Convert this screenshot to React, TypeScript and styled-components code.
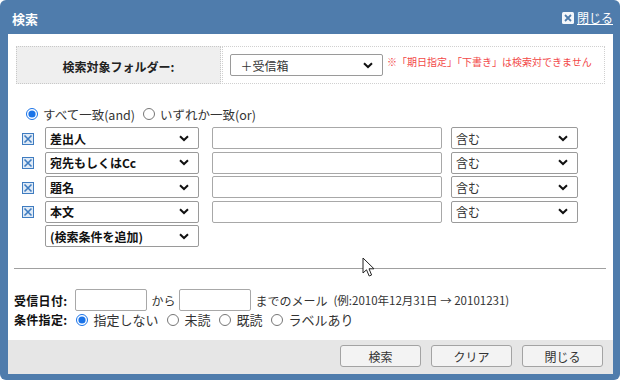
import React from "react";
import styled, { createGlobalStyle } from "styled-components";

const GlobalStyle = createGlobalStyle`
  html, body { margin: 0; padding: 0; background: #ffffff; }
  body { font-family: "Noto Sans CJK JP", "Noto Sans", sans-serif; font-size: 12px; color: #222; }
`;

const Chevron = () => (
  <svg width="10" height="7" viewBox="0 0 10 7">
    <path d="M1 1.2 L5 5 L9 1.2" fill="none" stroke="#111" strokeWidth="2" />
  </svg>
);

const CrossBox = () => (
  <svg width="12" height="12" viewBox="0 0 12 12">
    <rect x="0.5" y="0.5" width="11" height="11" fill="#dfeaf6" stroke="#3f7cc0" />
    <path d="M2.5 2.5 L9.5 9.5 M9.5 2.5 L2.5 9.5" stroke="#3f7cc0" strokeWidth="1.6" />
  </svg>
);

const CloseIcon = () => (
  <svg width="12" height="12" viewBox="0 0 12 12">
    <rect x="0" y="0" width="12" height="12" rx="1.5" fill="#f4f7fb" />
    <path d="M3 3 L9 9 M9 3 L3 9" stroke="#4f7cac" strokeWidth="1.8" />
  </svg>
);

const Cursor = () => (
  <svg width="14" height="21" viewBox="0 0 14 21">
    <path
      d="M1 1 L1 16 L4.5 12.8 L7.2 19 L9.6 18 L7 11.8 L12 11.8 Z"
      fill="#fff"
      stroke="#222"
      strokeWidth="1"
      strokeLinejoin="round"
    />
  </svg>
);

export default function App() {
  const rows = ["差出人", "宛先もしくはCc", "題名", "本文"];
  return (
    <>
      <GlobalStyle />
      <Frame>
        <TitleBar>
          <Title>検索</Title>
          <CloseLink>
            <CloseIcon />
            <span>閉じる</span>
          </CloseLink>
        </TitleBar>
        <Content>
          <FolderTable>
            <FolderLabel>検索対象フォルダー:</FolderLabel>
            <FolderCell>
              <Select $width={153}>
                <SelectText>&nbsp;&nbsp;＋受信箱</SelectText>
                <Chevron />
              </Select>
              <Note>※「期日指定」「下書き」は検索対できません</Note>
            </FolderCell>
          </FolderTable>

          <RadioRow>
            <RadioLabel>
              <Radio type="radio" name="match" defaultChecked />
              すべて一致(and)
            </RadioLabel>
            <RadioLabel>
              <Radio type="radio" name="match" />
              いずれか一致(or)
            </RadioLabel>
          </RadioRow>

          <ConditionGrid>
            {rows.map((r) => (
              <React.Fragment key={r}>
                <IconCell>
                  <CrossBox />
                </IconCell>
                <Cell>
                  <Select $width={154} $bold>
                    <SelectText>{r}</SelectText>
                    <Chevron />
                  </Select>
                </Cell>
                <Cell>
                  <TextInput $width={230} />
                </Cell>
                <Cell>
                  <Select $width={127}>
                    <SelectText>含む</SelectText>
                    <Chevron />
                  </Select>
                </Cell>
              </React.Fragment>
            ))}
            <IconCell />
            <Cell>
              <Select $width={154} $bold>
                <SelectText>(検索条件を追加)</SelectText>
                <Chevron />
              </Select>
            </Cell>
          </ConditionGrid>

          <Divider />

          <DateRow>
            <FieldLabel>受信日付:</FieldLabel>
            <TextInput $width={72} />
            <span>から</span>
            <TextInput $width={72} />
            <span>までのメール</span>
            <Hint>(例:2010年12月31日 → 20101231)</Hint>
          </DateRow>

          <StatusRow>
            <FieldLabel>条件指定:</FieldLabel>
            <RadioLabel>
              <Radio type="radio" name="status" defaultChecked />
              指定しない
            </RadioLabel>
            <RadioLabel>
              <Radio type="radio" name="status" />
              未読
            </RadioLabel>
            <RadioLabel>
              <Radio type="radio" name="status" />
              既読
            </RadioLabel>
            <RadioLabel>
              <Radio type="radio" name="status" />
              ラベルあり
            </RadioLabel>
          </StatusRow>

          <CursorMark>
            <Cursor />
          </CursorMark>
        </Content>
        <Footer>
          <Button>検索</Button>
          <Button>クリア</Button>
          <Button>閉じる</Button>
        </Footer>
      </Frame>
    </>
  );
}

const Frame = styled.div`
  width: 620px;
  height: 380px;
  box-sizing: border-box;
  background: #4f7cac;
  border-radius: 6px;
  padding: 0 7px 6px 8px;
  display: flex;
  flex-direction: column;
`;

const TitleBar = styled.div`
  height: 34px;
  display: flex;
  align-items: center;
  justify-content: space-between;
  padding: 0 0 0 4px;
  color: #fff;
`;

const Title = styled.div`
  font-weight: bold;
  font-size: 13px;
  margin-top: 2px;
`;

const CloseLink = styled.div`
  display: flex;
  align-items: center;
  gap: 3px;
  font-size: 12px;
  margin-top: 1px;
  span {
    text-decoration: underline;
  }
`;

const Content = styled.div`
  position: relative;
  flex: 1;
  background: #fff;
  display: flex;
  flex-direction: column;
  padding: 0 8px;
`;

const FolderTable = styled.div`
  margin-top: 12px;
  height: 38px;
  display: grid;
  grid-template-columns: 205px 1fr;
  column-gap: 1px;
`;

const FolderLabel = styled.div`
  background: #efefef;
  border: 1px dotted #c8c8c8;
  display: flex;
  align-items: center;
  justify-content: center;
  font-weight: bold;
  font-size: 12px;
  padding-top: 2px;
`;

const FolderCell = styled.div`
  border: 1px dotted #d0d0d0;
  display: flex;
  align-items: center;
  padding-left: 7px;
  gap: 4px;
`;

const Note = styled.span`
  color: #f24848;
  font-size: 10px;
  align-self: flex-start;
  margin-top: 7px;
`;

const Select = styled.div<{ $width: number; $bold?: boolean }>`
  width: ${(p) => p.$width}px;
  height: 22px;
  box-sizing: border-box;
  border: 1px solid #9a9a9a;
  border-radius: 2px;
  background: #fff;
  display: flex;
  align-items: center;
  justify-content: space-between;
  padding: 0 9px 0 4px;
  font-weight: ${(p) => (p.$bold ? "bold" : "normal")};
  color: ${(p) => (p.$bold ? "#111" : "#333")};
  font-size: 12px;
`;

const SelectText = styled.span`
  white-space: nowrap;
`;

const RadioRow = styled.div`
  margin-top: 22px;
  height: 16px;
  display: flex;
  align-items: center;
  gap: 8px;
  padding-left: 10px;
  color: #333;
  font-size: 12.5px;
`;

const RadioLabel = styled.label`
  display: inline-flex;
  align-items: center;
  gap: 5px;
  white-space: nowrap;
`;

const Radio = styled.input`
  margin: 0;
  width: 12px;
  height: 12px;
  accent-color: #1a73e8;
`;

const ConditionGrid = styled.div`
  margin-top: 5px;
  padding-left: 6px;
  display: grid;
  grid-template-columns: 23px 167px 239px 127px;
  grid-auto-rows: 22px;
  row-gap: 2.5px;
`;

const Cell = styled.div`
  display: flex;
  align-items: center;
`;

const IconCell = styled(Cell)`
  padding-top: 1px;
`;

const TextInput = styled.input<{ $width: number }>`
  width: ${(p) => p.$width}px;
  height: 22px;
  box-sizing: border-box;
  border: 1px solid #a8a8a8;
  border-radius: 2px;
  margin: 0;
  padding: 0 4px;
`;

const Divider = styled.div`
  margin: 21px -1px 0 -2px;
  height: 1px;
  background: #a0a0a0;
`;

const DateRow = styled.div`
  margin-top: 20px;
  margin-left: -2px;
  height: 22px;
  display: flex;
  align-items: center;
  gap: 4px;
  color: #333;
`;

const FieldLabel = styled.span`
  font-weight: bold;
  font-size: 12px;
  color: #111;
  margin-right: 4px;
  letter-spacing: 0.3px;
`;

const Hint = styled.span`
  font-size: 11.5px;
  margin-left: 2px;
`;

const StatusRow = styled.div`
  height: 17px;
  margin-left: -2px;
  display: flex;
  align-items: center;
  gap: 9px;
  color: #333;
  font-size: 13px;
  ${FieldLabel} {
    margin-right: 0;
  }
`;

const CursorMark = styled.div`
  position: absolute;
  left: 354px;
  top: 223px;
  line-height: 0;
`;

const Footer = styled.div`
  height: 34px;
  background: #e6e6e6;
  display: flex;
  justify-content: flex-end;
  align-items: flex-start;
  gap: 10px;
  padding: 5px 10px 0 0;
  box-sizing: border-box;
`;

const Button = styled.button`
  width: 81px;
  height: 22px;
  border: 1px solid #a3a3a3;
  border-radius: 3px;
  background: #f3f3f3;
  color: #333;
  font-family: inherit;
  font-size: 12px;
  padding: 0;
`;
